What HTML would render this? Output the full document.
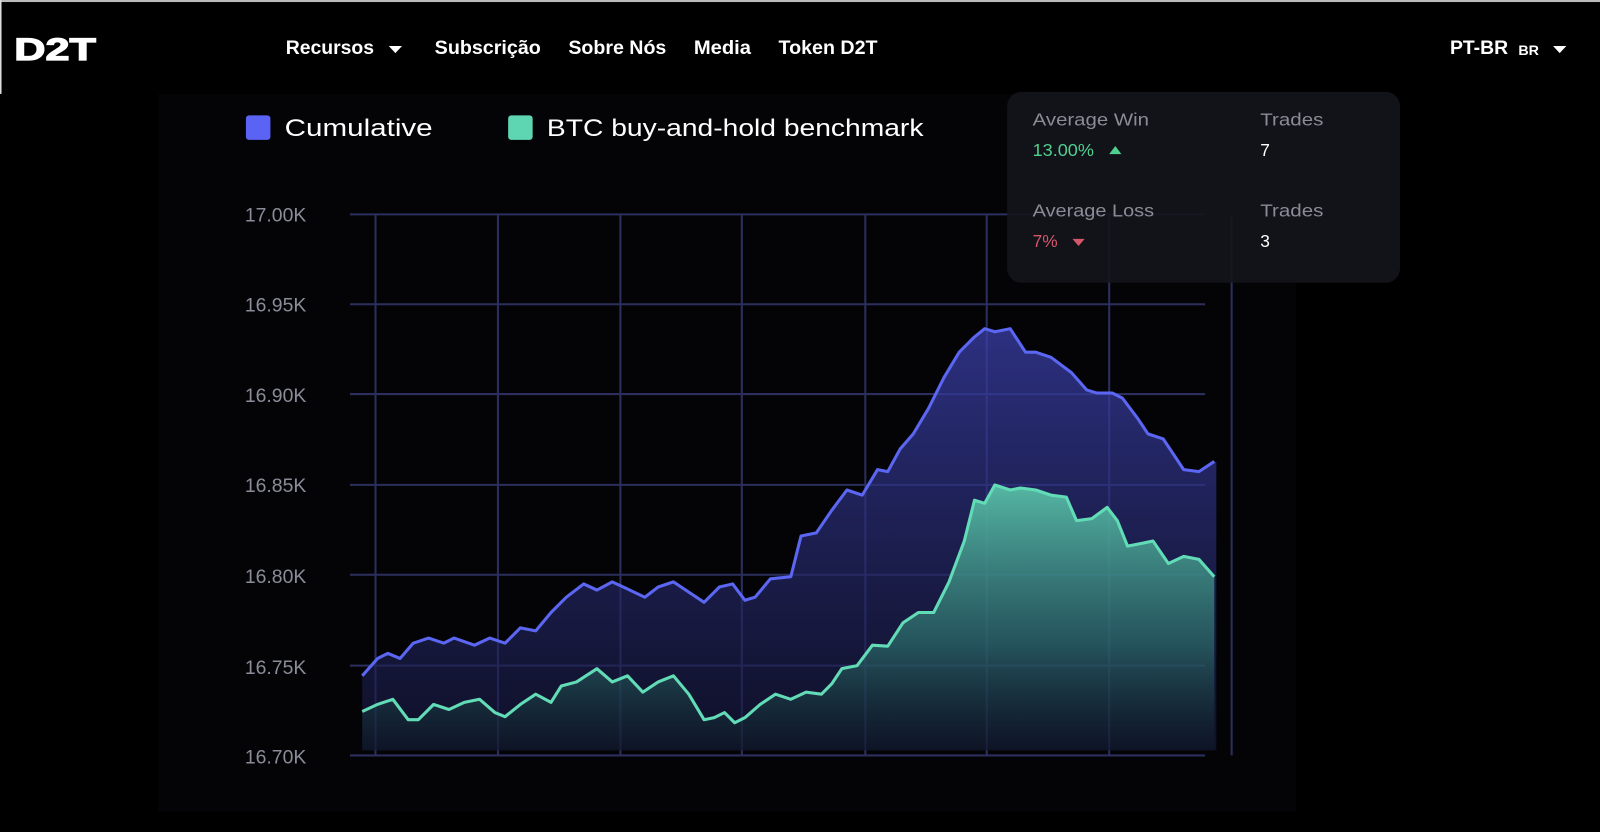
<!DOCTYPE html>
<html><head><meta charset="utf-8"><style>
html,body{margin:0;padding:0;background:#000;width:1600px;height:832px;overflow:hidden}
svg{display:block}
text{font-family:"Liberation Sans",sans-serif}
</style></head><body>
<svg width="1600" height="832" viewBox="0 0 1568 815" preserveAspectRatio="none" xmlns="http://www.w3.org/2000/svg">
<defs>
<linearGradient id="gb" x1="0" y1="0" x2="0" y2="1"><stop offset="0" stop-color="#3a3fa8" stop-opacity=".75"/><stop offset="1" stop-color="#16183e" stop-opacity=".6"/></linearGradient>
<linearGradient id="gg" x1="0" y1="0" x2="0" y2="1"><stop offset="0" stop-color="#5fd1b0" stop-opacity=".85"/><stop offset=".6" stop-color="#2f7c72" stop-opacity=".6"/><stop offset="1" stop-color="#0c1a22" stop-opacity=".4"/></linearGradient>
</defs>
<rect width="1568" height="815" fill="#000"/>
<rect x="0" y="0" width="1568" height="2" fill="#bbb"/>
<rect x="0" y="0" width="1.5" height="92" fill="#ddd"/>
<rect x="155" y="92" width="1115" height="703" fill="#040407"/>
<!-- nav -->
<text x="14" y="59" font-size="31" font-weight="bold" fill="#fff" textLength="80" lengthAdjust="spacingAndGlyphs" stroke="#fff" stroke-width="1.2">D2T</text>
<g font-size="19" font-weight="bold" fill="#fff">
<text x="280" y="53">Recursos</text>
<path d="M381 45h13l-6.5 7z" fill="#fff"/>
<text x="426" y="53" textLength="104" lengthAdjust="spacingAndGlyphs">Subscrição</text>
<text x="557" y="53" textLength="96" lengthAdjust="spacingAndGlyphs">Sobre Nós</text>
<text x="680" y="53" textLength="56" lengthAdjust="spacingAndGlyphs">Media</text>
<text x="763" y="53" textLength="97" lengthAdjust="spacingAndGlyphs">Token D2T</text>
<text x="1421" y="53">PT-BR</text>
<text x="1488" y="54" font-size="14">BR</text>
<path d="M1522 45h13l-6.5 7z" fill="#fff"/>
</g>
<!-- legend -->
<rect x="241" y="113" width="24" height="24" rx="3" fill="#5b63f5"/>
<text x="279" y="133" font-size="24" fill="#fff" textLength="145" lengthAdjust="spacingAndGlyphs">Cumulative</text>
<rect x="498" y="113" width="24" height="24" rx="3" fill="#5fd6b2"/>
<text x="536" y="133" font-size="24" fill="#fff" textLength="369" lengthAdjust="spacingAndGlyphs">BTC buy-and-hold benchmark</text>
<!-- y labels -->
<g font-size="19" fill="#8a8d99">
<text x="240" y="217">17.00K</text><text x="240" y="305">16.95K</text><text x="240" y="394">16.90K</text><text x="240" y="482">16.85K</text><text x="240" y="571">16.80K</text><text x="240" y="660">16.75K</text><text x="240" y="748">16.70K</text>
</g>
<!-- grid -->
<g stroke="#2c2f5e" stroke-width="2">
<path d="M343 210H1181M343 298H1181M343 386H1181M343 475H1181M343 563H1181M343 652H1181M343 740H1181"/>
<path d="M368 210V740M488 210V740M608 210V740M727 210V740M848 210V740M967 210V740M1087 210V740M1207 210V740"/>
</g>
<!-- blue -->
<polygon fill="url(#gb)" points="355,662 370,645 380,640 392,645 405,630 420,625 435,630 445,625 465,632 480,625 495,630 510,615 525,618 540,600 555,585 572,572 585,578 600,570 615,577 632,585 645,575 660,570 675,580 690,590 705,575 718,572 730,588 740,585 755,567 775,565 785,525 800,522 815,500 830,480 845,485 860,460 870,462 882,440 895,425 910,400 925,370 940,345 955,330 965,322 975,325 990,322 1005,345 1015,345 1030,350 1050,365 1065,382 1075,385 1090,385 1100,390 1115,410 1125,425 1140,430 1150,445 1160,460 1175,462 1192,452 1192,735 355,735"/>
<polyline fill="none" stroke="#5b66f2" stroke-width="3" stroke-linejoin="round" points="355,662 370,645 380,640 392,645 405,630 420,625 435,630 445,625 465,632 480,625 495,630 510,615 525,618 540,600 555,585 572,572 585,578 600,570 615,577 632,585 645,575 660,570 675,580 690,590 705,575 718,572 730,588 740,585 755,567 775,565 785,525 800,522 815,500 830,480 845,485 860,460 870,462 882,440 895,425 910,400 925,370 940,345 955,330 965,322 975,325 990,322 1005,345 1015,345 1030,350 1050,365 1065,382 1075,385 1090,385 1100,390 1115,410 1125,425 1140,430 1150,445 1160,460 1175,462 1190,452"/>
<!-- green -->
<polygon fill="url(#gg)" points="355,697 370,690 385,685 400,705 410,705 425,690 440,695 455,688 470,685 485,698 495,702 510,690 525,680 540,688 550,672 565,668 585,655 600,668 615,662 630,678 645,668 660,662 675,680 690,705 700,703 710,698 720,708 730,703 745,690 760,680 775,685 790,678 805,680 815,670 825,655 840,652 855,632 870,633 885,610 900,600 915,600 930,570 945,530 955,490 965,493 975,475 990,480 1000,478 1015,480 1030,485 1045,487 1055,510 1070,508 1085,497 1095,510 1105,535 1120,532 1130,530 1145,552 1160,545 1175,548 1190,565 1190,735 355,735"/>
<polyline fill="none" stroke="#62dcb6" stroke-width="3" stroke-linejoin="round" points="355,697 370,690 385,685 400,705 410,705 425,690 440,695 455,688 470,685 485,698 495,702 510,690 525,680 540,688 550,672 565,668 585,655 600,668 615,662 630,678 645,668 660,662 675,680 690,705 700,703 710,698 720,708 730,703 745,690 760,680 775,685 790,678 805,680 815,670 825,655 840,652 855,632 870,633 885,610 900,600 915,600 930,570 945,530 955,490 965,493 975,475 990,480 1000,478 1015,480 1030,485 1045,487 1055,510 1070,508 1085,497 1095,510 1105,535 1120,532 1130,530 1145,552 1160,545 1175,548 1190,565"/>
<!-- stats panel -->
<rect x="987" y="90" width="385" height="187" rx="14" fill="#14151c" fill-opacity=".88"/>
<g font-size="17">
<text x="1012" y="123" fill="#8a8c96" textLength="114" lengthAdjust="spacingAndGlyphs">Average Win</text>
<text x="1012" y="153" fill="#4fd08f" textLength="60" lengthAdjust="spacingAndGlyphs">13.00%</text>
<path d="M1087 151l6-8 6 8z" fill="#4fd08f"/>
<text x="1235" y="123" fill="#8a8c96" textLength="62" lengthAdjust="spacingAndGlyphs">Trades</text>
<text x="1235" y="153" fill="#fff">7</text>
<text x="1012" y="212" fill="#8a8c96" textLength="119" lengthAdjust="spacingAndGlyphs">Average Loss</text>
<text x="1012" y="242" fill="#d4566a">7%</text>
<path d="M1051 234h12l-6 7z" fill="#d4566a"/>
<text x="1235" y="212" fill="#8a8c96" textLength="62" lengthAdjust="spacingAndGlyphs">Trades</text>
<text x="1235" y="242" fill="#fff">3</text>
</g>
</svg>
</body></html>
